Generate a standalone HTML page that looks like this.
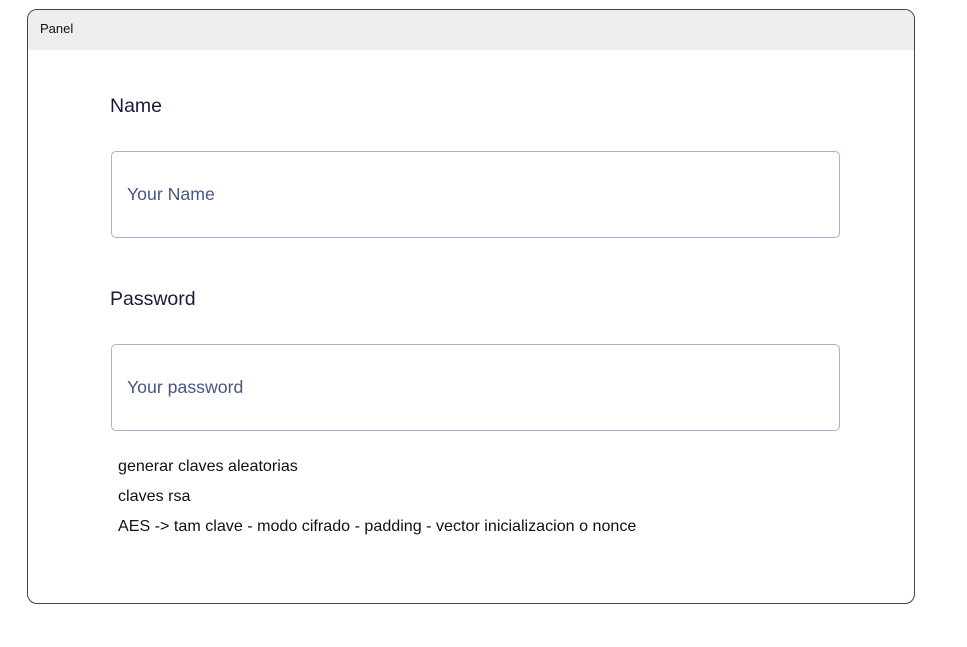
<!DOCTYPE html>
<html><head><style>
html,body{margin:0;padding:0;background:#fff;width:967px;height:647px;overflow:hidden;font-family:"Liberation Sans",sans-serif;}
.panel{position:absolute;left:27px;top:9px;width:886px;height:593px;border:1.5px solid #444;border-radius:10px;overflow:hidden;background:#fff;}
.hdr{height:40px;background:#eee;font-size:13px;color:#111;line-height:38px;padding-left:12px;}
.lbl{position:absolute;left:82px;font-size:19.5px;color:#1a1a3a;}
.inp{position:absolute;left:83px;width:727px;height:85px;border:1px solid #a9b1d2;border-radius:5px;}
.inp span{position:absolute;left:15px;top:32px;font-size:17.7px;color:#4a5585;}
.txt{position:absolute;left:90px;font-size:16.1px;color:#111;}
</style></head><body>
<div class="panel">
<div class="hdr">Panel</div>
<div class="lbl" style="top:85px">Name</div>
<div class="inp" style="top:141px"><span>Your Name</span></div>
<div class="lbl" style="top:278px">Password</div>
<div class="inp" style="top:334px"><span>Your password</span></div>
<div class="txt" style="top:447px">generar claves aleatorias</div>
<div class="txt" style="top:477px">claves rsa</div>
<div class="txt" style="top:507px">AES -&gt; tam clave - modo cifrado - padding - vector inicializacion o nonce</div>
</div>
</body></html>
